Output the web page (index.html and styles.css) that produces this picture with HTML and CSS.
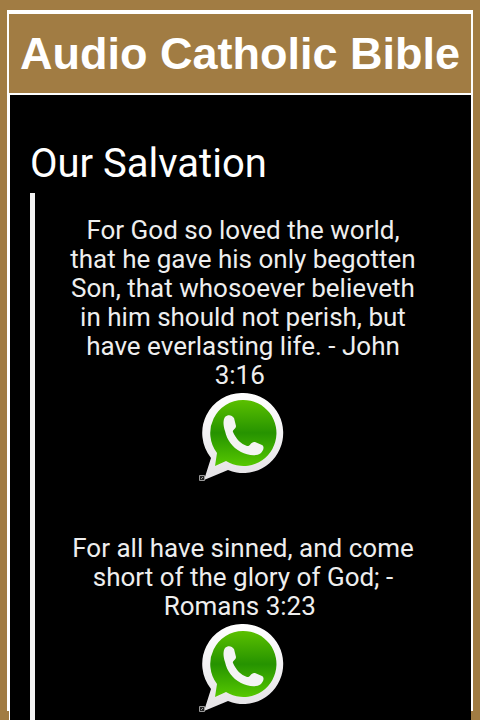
FILE: index.html
```
<!DOCTYPE html>
<html lang="en">
<head>
  <meta charset="UTF-8">
  <meta name="viewport" content="width=device-width, initial-scale=1">
  <title>Audio Catholic Bible</title>
  <link rel="stylesheet" href="styles.css">
</head>
<body>
  <svg width="0" height="0" class="defs" aria-hidden="true">
    <defs>
      <linearGradient id="ring" x1="0" y1="0" x2="0" y2="1">
        <stop offset="0" stop-color="#fff"/>
        <stop offset="1" stop-color="#e4e2e5"/>
      </linearGradient>
      <linearGradient id="green" x1="0" y1="0" x2="0" y2="1">
        <stop offset="0" stop-color="#5bc000"/>
        <stop offset="0.5" stop-color="#269300"/>
        <stop offset="1" stop-color="#56c800"/>
      </linearGradient>
      <symbol id="whatsapp" viewBox="2 0 88 88">
        <path fill="url(#ring)" d="M46 0a40 40 0 1 1-15 77L7 87l7-22A40 40 0 0 1 46 0Z"/>
        <path fill="url(#green)" d="M46 7a33 33 0 1 1-17 61L18 73l2-13A33 33 0 0 1 46 7Z"/>
        <path fill="#f4f4f4" d="M28 24c3-3 7-2 9 1l2 8c0 3-4 4-3 6 3 7 8 12 14 14 3 1 4-5 8-4l7 3c3 2 1 6-1 8-5 4-14 2-20-1-9-5-14-12-16-21-2-6-2-11 0-14Z"/>
        <path fill="#222" stroke="#999" d="M2.500 82.500h5v5h-5zM4 86l2-2"/>
      </symbol>
    </defs>
  </svg>

  <div class="page">
    <header class="header">
      <h1>Audio Catholic Bible</h1>
    </header>
    <main class="content">
      <h2>Our Salvation</h2>
      <div class="verses">
        <div class="verse">
          <p>For God so loved the world, that he gave his only begotten Son, that whosoever believeth in him should not perish, but have everlasting life. - John 3:16&nbsp;</p>
          <a href="#" class="share" aria-label="Share on WhatsApp"><svg><use href="#whatsapp"/></svg></a>
        </div>
        <div class="verse">
          <p>For all have sinned, and come short of the glory of God; - Romans 3:23&nbsp;</p>
          <a href="#" class="share" aria-label="Share on WhatsApp"><svg><use href="#whatsapp"/></svg></a>
        </div>
      </div>
    </main>
  </div>
</body>
</html>
```

FILE: styles.css
```
* {
  box-sizing: border-box;
}

html, body {
  height: 100%;
}

body {
  margin: 0;
  padding: 10px 7px 9px;
  background-color: #a17c43;
  font-family: Roboto, sans-serif;
  color: #fff;
  overflow: hidden;
}

.defs {
  position: absolute;
}

.page {
  height: 100%;
  border: 2px solid #fff;
  border-top-width: 4px;
  border-bottom: 0;
}

.header {
  border-bottom: 2px solid #fff;
  text-align: center;
}

.header h1 {
  margin: 0;
  font-family: "Arial Rounded MT Bold", "Liberation Sans", sans-serif;
  font-size: 45px;
  line-height: 79px;
  white-space: nowrap;
}

.content {
  min-height: 100vh;
  padding: 45px 20px 0;
  border-left: 1px solid #fff;
  background-color: #000;
}

.content h2 {
  margin: 0;
  font-size: 40px;
  font-weight: normal;
  line-height: 47px;
}

.verses {
  margin-top: 6px;
  padding: 23px 30px;
  border-left: 5px solid #f4f4f4;
}

.verse {
  margin-bottom: 53px;
  text-align: center;
}

.verse p {
  margin: 0 0 3px;
  color: #eee;
  font-size: 26px;
  line-height: 29px;
}

.share {
  display: block;
  width: 88px;
  margin: 0 auto;
}

.share svg {
  display: block;
  width: 88px;
  height: 88px;
}
```
